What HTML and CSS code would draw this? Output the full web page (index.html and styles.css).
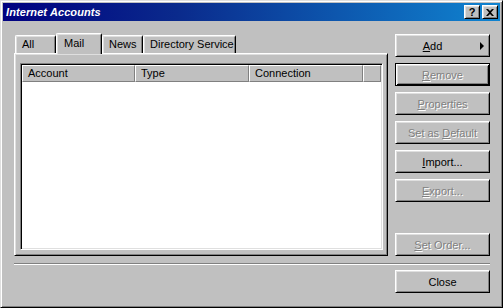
FILE: index.html
```html
<!DOCTYPE html>
<html>
<head>
<meta charset="utf-8">
<link rel="stylesheet" href="styles.css">
</head>
<body>
<div class="window">
  <div class="titlebar">
    <span class="title">Internet Accounts</span>
    <div class="caption-buttons">
      <span class="cap-btn help">?</span>
      <span class="cap-btn close-x">
        <svg width="8" height="7" viewBox="0 0 8 7"><path d="M0 0h2l2 2 2-2h2L5 3.5 8 7H6L4 5 2 7H0l3-3.5z" fill="#000"/></svg>
      </span>
    </div>
  </div>
  <div class="body">
    <div class="main">
      <div class="tabs-col">
        <div class="tabs">
          <div class="tab t-all">All</div>
          <div class="tab t-mail selected">Mail</div>
          <div class="tab t-news">News</div>
          <div class="tab t-dir">Directory Service</div>
        </div>
        <div class="panel">
          <div class="listview">
            <div class="header">
              <div class="hcell c1">Account</div>
              <div class="hcell c2">Type</div>
              <div class="hcell c3">Connection</div>
              <div class="hcell c4"></div>
            </div>
          </div>
        </div>
      </div>
      <div class="buttons">
        <div class="btn add"><span class="lbl"><u>A</u>dd</span><span class="arrow"><span class="tri"></span></span></div>
        <div class="btn default disabled"><span><u>R</u>emove</span></div>
        <div class="btn disabled"><span><u>P</u>roperties</span></div>
        <div class="btn disabled"><span>Set as <u>D</u>efault</span></div>
        <div class="btn"><span><u>I</u>mport...</span></div>
        <div class="btn disabled"><span><u>E</u>xport...</span></div>
        <div class="btn disabled last"><span><u>S</u>et Order...</span></div>
      </div>
    </div>
    <div class="separator"></div>
    <div class="footer">
      <div class="btn"><span>Close</span></div>
    </div>
  </div>
</div>
</body>
</html>
```
FILE: styles.css
```css
* { box-sizing: border-box; }
html, body { margin: 0; padding: 0; }
body {
  width: 503px;
  height: 308px;
  background: #c0c0c0;
  font-family: "Liberation Sans", Arial, sans-serif;
  font-size: 11px;
  color: #000;
  overflow: hidden;
}
.window {
  width: 503px;
  height: 308px;
  background: #c0c0c0;
  border-top: 1px solid #dfdfdf;
  border-left: 1px solid #dfdfdf;
  border-right: 1px solid #000;
  border-bottom: 1px solid #000;
  box-shadow: inset 1px 1px #fff, inset -1px -1px #808080;
  padding: 2px;
  display: flex;
  flex-direction: column;
}
.titlebar {
  height: 18px;
  flex: none;
  background: linear-gradient(to right, #000080 0%, #0a2a8c 35%, #1084d0 100%);
  display: flex;
  align-items: center;
  justify-content: space-between;
  padding: 0 2px 0 3px;
}
.title {
  color: #fff;
  font-weight: bold;
  font-style: italic;
  font-size: 11px;
  letter-spacing: 0.1px;
}
.caption-buttons { display: flex; gap: 2px; }
.cap-btn {
  width: 16px;
  height: 14px;
  background: #c0c0c0;
  border-top: 1px solid #fff;
  border-left: 1px solid #fff;
  border-right: 1px solid #000;
  border-bottom: 1px solid #000;
  box-shadow: inset 1px 1px #dfdfdf, inset -1px -1px #808080;
  display: flex;
  align-items: center;
  justify-content: center;
  font-weight: bold;
  font-size: 11px;
  line-height: 1;
}
.body {
  flex: 1;
  display: flex;
  flex-direction: column;
  padding: 12px 10px 0 11px;
}
.main {
  display: flex;
  gap: 7px;
  height: 223px;
}
.tabs-col {
  width: 374px;
  display: flex;
  flex-direction: column;
}
.tabs {
  height: 20px;
  display: flex;
  align-items: flex-end;
  padding-left: 1px;
}
.tab {
  height: 18px;
  background: #c0c0c0;
  border-top: 1px solid #fff;
  border-left: 1px solid #fff;
  border-right: 1px solid #000;
  border-top-left-radius: 2px;
  border-top-right-radius: 2px;
  box-shadow: inset 1px 1px #dfdfdf, inset -1px 0 #808080;
  padding-left: 6px;
  line-height: 16px;
  white-space: nowrap;
}
.t-all { width: 41px; }
.t-mail { width: 46px; }
.t-news { width: 41px; }
.t-dir { width: 93px; }
.tab.selected {
  height: 21px;
  margin-bottom: -1px;
  position: relative;
  z-index: 1;
  padding-left: 7px;
  line-height: 18px;
}
.panel {
  height: 203px;
  background: #c0c0c0;
  border-top: 1px solid #fff;
  border-left: 1px solid #fff;
  border-right: 1px solid #000;
  border-bottom: 1px solid #000;
  box-shadow: inset 1px 1px #dfdfdf, inset -1px -1px #808080;
  padding: 9px 4px 5px 5px;
}
.listview {
  width: 363px;
  height: 187px;
  background: #fff;
  border-top: 1px solid #808080;
  border-left: 1px solid #808080;
  border-right: 1px solid #fff;
  border-bottom: 1px solid #fff;
  box-shadow: inset 1px 1px #000, inset -1px -1px #dfdfdf;
  padding: 1px;
}
.header {
  display: flex;
  height: 17px;
}
.hcell {
  background: #c0c0c0;
  border-top: 1px solid #fff;
  border-left: 1px solid #fff;
  border-right: 1px solid #808080;
  border-bottom: 1px solid #808080;
  padding-left: 5px;
  line-height: 15px;
}
.c1 { width: 113px; }
.c2 { width: 114px; }
.c3 { width: 114px; }
.c4 { width: 18px; }
.buttons {
  width: 95px;
  display: flex;
  flex-direction: column;
  gap: 6px;
  padding-top: 1px;
}
.btn {
  height: 23px;
  flex: none;
  background: #c0c0c0;
  border-top: 1px solid #fff;
  border-left: 1px solid #fff;
  border-right: 1px solid #000;
  border-bottom: 1px solid #000;
  box-shadow: inset 1px 1px #dfdfdf, inset -1px -1px #808080;
  display: flex;
  align-items: center;
  justify-content: center;
  white-space: nowrap;
}
.btn.default {
  border: 1px solid #000;
  box-shadow: inset 1px 1px #fff, inset -1px -1px #000, inset 2px 2px #dfdfdf, inset -2px -2px #808080;
}
.btn.disabled {
  color: #808080;
  text-shadow: 1px 1px 0 #fff;
}
.btn.last { margin-top: auto; }
.btn.add { justify-content: flex-start; }
.btn.add .lbl { flex: 1; text-align: center; }
.btn.add .arrow {
  width: 20px;
  display: flex;
  align-items: center;
  padding-left: 11px;
}
.tri {
  width: 0;
  height: 0;
  border-top: 4px solid transparent;
  border-bottom: 4px solid transparent;
  border-left: 4px solid #000;
}
.separator {
  margin-top: 7px;
  height: 2px;
  border-top: 1px solid #808080;
  border-bottom: 1px solid #fff;
}
.footer {
  display: flex;
  justify-content: flex-end;
  margin-top: 5px;
}
.footer .btn { width: 95px; }
```
